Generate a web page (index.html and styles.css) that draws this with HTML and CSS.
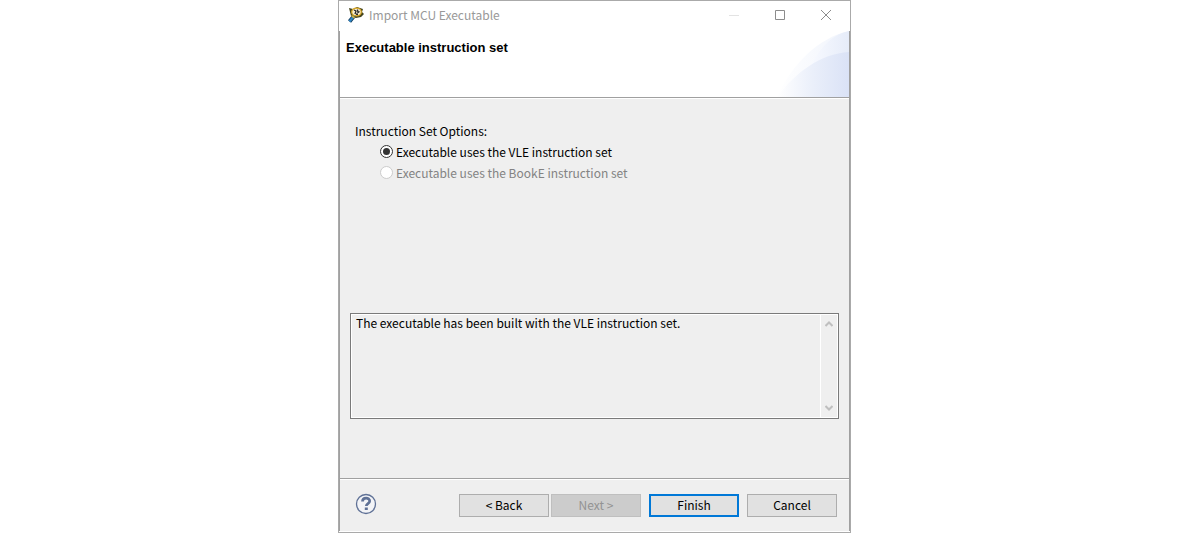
FILE: index.html
```html
<!DOCTYPE html>
<html lang="en">
<head>
<meta charset="utf-8">
<title>Import MCU Executable</title>
<link rel="stylesheet" href="styles.css">
</head>
<body>
<main class="dialog">
  <header class="titlebar">
    <svg class="app-icon" width="16" height="16" viewBox="0 0 16 16" aria-hidden="true">
      <path d="M1 1l4 1 4-2 6 2-1 3 2 2-3 3-5 1-5-2z" fill="#46461e"/>
      <path d="M6 9L1.500 14.500" stroke="#123a5c" stroke-width="4"/>
      <path d="M6 9L1.500 14.500" stroke="#2f86c4" stroke-width="2.200"/>
      <ellipse cx="8.500" cy="5" rx="4.800" ry="3.900" fill="#f8efd0" stroke="#d9a520" stroke-width="1.200"/>
      <path d="M6 3l2 1-1 3M9.500 2.500l.5 3 1.500-1M8 7l2 .5" stroke="#222" stroke-width="1.300" fill="none"/>
      <path d="M3.500 8.500l3 2.500" stroke="#e5b52b" stroke-width="1.500"/>
    </svg>
    <span class="title">Import MCU Executable</span>
    <div class="window-controls">
      <button class="window-button" type="button" aria-label="Minimize" disabled><svg width="10" height="10" viewBox="0 0 10 10"><path d="M0 5.500h10" stroke="#e3e3e3"/></svg></button>
      <button class="window-button" type="button" aria-label="Maximize"><svg width="10" height="10" viewBox="0 0 10 10"><path d="M.5.5h9v9h-9z" fill="none" stroke="#8c8c8c"/></svg></button>
      <button class="window-button" type="button" aria-label="Close"><svg width="10" height="10" viewBox="0 0 10 10"><path d="M0 0l10 10M10 0L0 10" stroke="#8c8c8c"/></svg></button>
    </div>
  </header>
  <div class="frame">
    <section class="banner">
      <h1 class="heading">Executable instruction set</h1>
      <svg class="banner-art" width="75" height="66" viewBox="0 0 75 66" aria-hidden="true">
        <defs>
          <linearGradient id="outer"><stop offset="0" stop-color="#fff"/><stop offset="1" stop-color="#f0f4fc"/></linearGradient>
          <linearGradient id="middle"><stop offset="0" stop-color="#f8faff"/><stop offset="1" stop-color="#e6ecf9"/></linearGradient>
          <linearGradient id="inner"><stop offset="0" stop-color="#fff"/><stop offset=".5" stop-color="#eaeffa"/><stop offset="1" stop-color="#dae2f6"/></linearGradient>
        </defs>
        <path d="M3 66C18 33 44 7 75 0v66z" fill="url(#outer)"/>
        <path d="M36 36C45 19 56 4 75 0v36z" fill="url(#middle)"/>
        <path d="M3 66C22 41 46 23 75 21v45z" fill="url(#inner)"/>
      </svg>
    </section>
    <section class="content">
      <fieldset class="options">
        <legend class="legend">Instruction Set Options:</legend>
        <label class="option"><input class="radio" type="radio" name="instruction-set" checked>Executable uses the VLE instruction set</label>
        <label class="option option-disabled"><input class="radio" type="radio" name="instruction-set" disabled>Executable uses the BookE instruction set</label>
      </fieldset>
      <div class="description">
        <textarea class="description-text" aria-label="Description" readonly>The executable has been built with the VLE instruction set.</textarea>
        <div class="scrollbar" aria-hidden="true">
          <svg width="8" height="6" viewBox="0 0 8 6"><path d="M.5 5L4 1.500 7.500 5" fill="none" stroke="#bfbfbf" stroke-width="2"/></svg>
          <svg width="8" height="6" viewBox="0 0 8 6"><path d="M.5 1L4 4.500 7.500 1" fill="none" stroke="#bfbfbf" stroke-width="2"/></svg>
        </div>
      </div>
    </section>
    <footer class="footer">
      <button class="help" type="button" aria-label="Help">
        <svg width="22" height="22" viewBox="0 0 22 22"><circle cx="11" cy="11" r="9.500" fill="#f3f4f7" stroke="#5f7196" stroke-width="1.300"/><path d="M7.500 8.500C7.500 4 14.700 4.100 14.700 8c0 2.700-3.400 2.500-3.400 5" fill="none" stroke="#5f7196" stroke-width="2.700"/><path d="M9.800 14.500h3V17h-3z" fill="#5f7196"/></svg>
      </button>
      <div class="actions">
        <button class="button" type="button">&lt; Back</button>
        <button class="button" type="button" disabled>Next &gt;</button>
        <button class="button button-default" type="button">Finish</button>
        <button class="button" type="button">Cancel</button>
      </div>
    </footer>
  </div>
</main>
</body>
</html>
```
FILE: styles.css
```css
* { box-sizing: border-box; }

body {
  margin: 0;
  padding-left: 1px;
  background: #fff;
  color: #000;
  font: 12px/16px "Noto Sans CJK KR", "Noto Sans", sans-serif;
}

button, textarea { font: inherit; color: inherit; }

.dialog {
  display: flex;
  flex-direction: column;
  max-width: 513px;
  min-height: 100vh;
  margin: 0 auto;
  border: 1px solid #aaa;
  background: #fff;
}

.titlebar {
  display: flex;
  align-items: center;
  height: 30px;
  padding: 0 1px 2px 9px;
}

.app-icon { flex: none; }

.title {
  flex: 1;
  padding-left: 5px;
  color: #999;
}

.window-controls { display: flex; }

.window-button {
  display: flex;
  align-items: center;
  justify-content: center;
  width: 46px;
  height: 28px;
  padding: 0;
  border: 0;
  background: none;
}

.frame {
  display: flex;
  flex: 1;
  flex-direction: column;
  margin-bottom: 1px;
  border: solid #a0a0a0;
  border-width: 0 1px;
  background: #efefef;
}

.banner {
  display: flex;
  justify-content: space-between;
  border-bottom: 1px solid #a0a0a0;
  background: #fff;
}

.heading {
  margin: 0;
  padding: 9px 6px;
  font: bold 13px/16px "Liberation Sans", Arial, sans-serif;
}

.banner-art { display: block; }

.content {
  display: flex;
  flex: 1;
  flex-direction: column;
  gap: 130px;
  padding: 24px 10px 16px;
  border-top: 1px solid #fff;
}

.options {
  min-width: 0;
  margin: 0;
  padding: 0 5px;
  border: 0;
}

.legend { padding: 0 0 2px; }

.option {
  display: flex;
  align-items: center;
  gap: 3px;
  height: 21px;
  padding-left: 25px;
}

.option-disabled { color: #838383; }

.radio {
  display: grid;
  place-items: center;
  width: 13px;
  height: 13px;
  margin: 0;
  border: 1px solid #333;
  border-radius: 50%;
  background: #fff;
  appearance: none;
}

.radio:checked::before {
  width: 7px;
  height: 7px;
  border-radius: 50%;
  background: #333;
  content: "";
}

.radio:disabled { border-color: #ccc; }

.description {
  display: flex;
  height: 106px;
  border: 1px solid #7a7a7a;
}

.description-text {
  flex: 1;
  padding: 0 4px;
  border: 1px solid #fff;
  outline: 0;
  background: none;
  resize: none;
  overflow: hidden;
}

.scrollbar {
  display: flex;
  flex-direction: column;
  align-items: center;
  justify-content: space-between;
  width: 17px;
  padding: 6px 0;
  border: solid #fff;
  border-width: 1px 1px 1px 0;
}

.footer {
  display: flex;
  align-items: center;
  justify-content: space-between;
  height: 53px;
  padding: 0 12px 0 15px;
  border-top: 1px solid #a0a0a0;
  box-shadow: inset 0 1px #fff;
}

.help {
  display: flex;
  padding: 0 0 2px;
  border: 0;
  background: none;
}

.actions { display: flex; gap: 8px; }

.button {
  width: 90px;
  height: 23px;
  padding: 0;
  border: 1px solid #adadad;
  background: #e1e1e1;
}

.button:disabled {
  margin-left: -6px;
  border-color: #bfbfbf;
  background: #ccc;
  color: #939393;
}

.button-default { border: 2px solid #0078d7; }
```
